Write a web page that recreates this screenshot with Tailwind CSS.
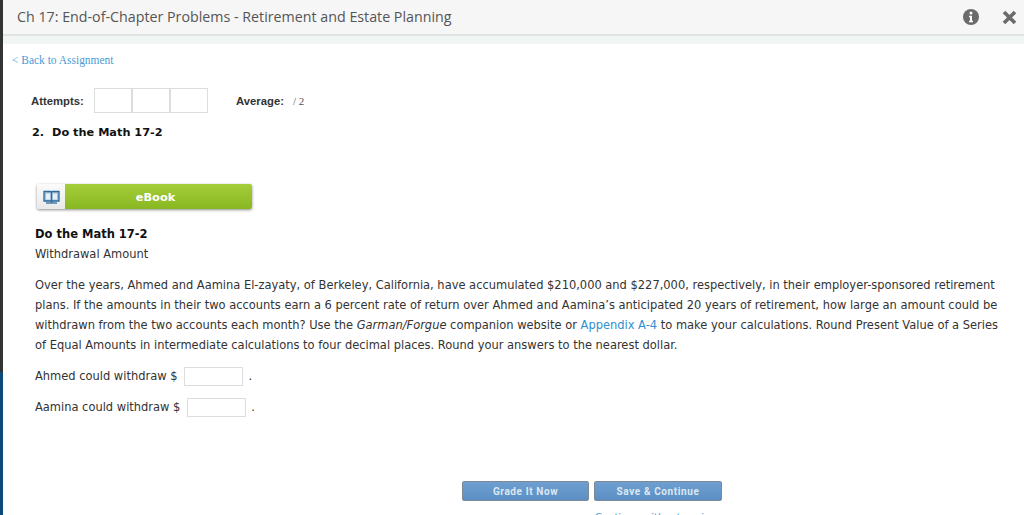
<!DOCTYPE html>
<html lang="en">
<head>
    <meta charset="UTF-8">
    <title>Do the Math 17-2</title>
    <script src="https://cdn.jsdelivr.net/npm/@tailwindcss/browser@4"></script>
</head>
<body class="bg-white h-[515px] overflow-hidden flex font-['DejaVu_Sans',sans-serif]">
    <!-- page edge behind the dialog -->
    <div class="w-[3px] shrink-0 flex flex-col">
        <div class="h-[372px] bg-[#333333]"></div>
        <div class="flex-1 bg-[#0b4a7a]"></div>
    </div>

    <div class="flex-1 min-w-0">
        <header class="h-[36px] bg-[#f6f6f6] border-b-2 border-[#dfe3e2] flex items-center pl-[14px] pr-[7px]">
            <h1 class="font-['Open_Sans',sans-serif] text-[14.25px] text-[#555555] flex-1">Ch 17: End-of-Chapter Problems - Retirement and Estate Planning</h1>
            <svg class="w-4 h-4 mr-[23px]" viewBox="0 0 16 16">
                <circle cx="8" cy="8" r="8" fill="#6b6b6b"/>
                <circle cx="8" cy="4" r="1.5" fill="#fff"/>
                <path d="M6 6.800h3v5h1v1.400H6v-1.400h1V8.200H6z" fill="#fff"/>
            </svg>
            <svg class="w-[15px] h-[15px]" viewBox="0 0 15 15">
                <path d="M2 2l11 11M13 2L2 13" stroke="#6b6b6b" stroke-width="3.6"/>
            </svg>
        </header>
        <div class="h-[8px] bg-[#f1f5f4]"></div>

        <a class="block mt-[9px] ml-[9px] font-['Liberation_Serif',serif] text-[11.45px] leading-[14px] text-[#4a9bd4]">&lt; Back to Assignment</a>

        <div class="mt-[21px] ml-[28px] flex items-center font-['Liberation_Sans',sans-serif] text-[11.3px] font-bold text-[#333333]">
            <span class="w-[63px] pt-[1px]">Attempts:</span>
            <div class="flex border border-[#dddddd] h-[25px] w-[114px]">
                <div class="flex-1 border-r-2 border-[#dddddd]"></div>
                <div class="flex-1 border-r-2 border-[#dddddd]"></div>
                <div class="flex-1"></div>
            </div>
            <span class="ml-[28px] pt-[1px]">Average:</span>
            <span class="ml-[9px] pt-[1px] font-['Liberation_Serif',serif] text-[11px] font-normal text-[#555555]">/ 2</span>
        </div>

        <h2 class="mt-[12px] ml-[29px] text-[11.3px] leading-[16px] font-bold text-[#111111] whitespace-pre">2.  Do the Math 17-2</h2>

        <div class="mt-[43px] ml-[34px] flex w-[215px] h-[25px] rounded-[2px] shadow-[0_1px_3px_rgba(0,0,0,0.45)]">
            <div class="w-[28px] bg-gradient-to-b from-[#fbfbfb] to-[#e9e9e9] flex items-center justify-center rounded-l-[2px]">
                <svg class="w-[17px] h-[14px]" viewBox="0 0 17 14">
                    <path d="M1 1.500h6.500l1 1 1-1H16v9.500H9.500l-1 1-1-1H1z" fill="#9fc0dc" stroke="#2f6a9c" stroke-width="1.300"/>
                    <path d="M3 3.500h4v6H3zM10 3.500h4v6h-4z" fill="#e6eff6"/>
                    <path d="M8.500 2.500v9" stroke="#2f6a9c" stroke-width="1"/>
                    <path d="M3 13h11" stroke="#2f6a9c" stroke-width="1.300"/>
                </svg>
            </div>
            <div class="flex-1 bg-gradient-to-b from-[#a5cd3a] to-[#88b820] rounded-r-[2px] flex items-center justify-center pr-[6px] pt-[3px] text-[11.3px] font-bold text-white">eBook</div>
        </div>

        <section class="ml-[32px] mr-[20px] mt-[17px] text-[11.46px] text-[#333333]">
            <h3 class="text-[11.500px] leading-[16px] font-bold text-[#111111]">Do the Math 17-2</h3>
            <p class="mt-[4px] leading-[16px]">Withdrawal Amount</p>
            <p class="mt-[13px] leading-[20px] whitespace-nowrap">
                Over the years, Ahmed and Aamina El-zayaty, of Berkeley, California, have accumulated $210,000 and $227,000, respectively, in their employer-sponsored retirement<br>
                plans. If the amounts in their two accounts earn a 6 percent rate of return over Ahmed and Aamina’s anticipated 20 years of retirement, how large an amount could be<br>
                withdrawn from the two accounts each month? Use the <em>Garman/Forgue</em> companion website or <a class="text-[#2f8fd0]">Appendix A-4</a> to make your calculations. Round Present Value of a Series<br>
                of Equal Amounts in intermediate calculations to four decimal places. Round your answers to the nearest dollar.
            </p>
            <div class="mt-[12px] flex items-center h-[19px]">
                <span>Ahmed could withdraw $</span>
                <div class="ml-[7px] w-[59px] h-[19px] border border-[#dddddd]"></div>
                <span class="ml-[5px]">.</span>
            </div>
            <div class="mt-[12px] flex items-center h-[19px]">
                <span>Aamina could withdraw $</span>
                <div class="ml-[7px] w-[59px] h-[19px] border border-[#dddddd]"></div>
                <span class="ml-[5px]">.</span>
            </div>
        </section>

        <div class="mt-[64px] ml-[459px] flex gap-[5px] font-['Roboto',sans-serif] text-[10px] font-bold tracking-[0.6px] text-[#dce8f3]">
            <div class="w-[127px] h-[20px] border border-[#7d8a96] rounded-[2px] bg-gradient-to-b from-[#6f9fd0] to-[#5b8fc4] flex items-center justify-center">Grade It Now</div>
            <div class="w-[128px] h-[20px] border border-[#7d8a96] rounded-[2px] bg-gradient-to-b from-[#6f9fd0] to-[#5b8fc4] flex items-center justify-center">Save &amp; Continue</div>
        </div>
        <a class="block mt-[9px] ml-[592px] text-[10px] text-[#4a9bd4] whitespace-nowrap">Continue without saving</a>
    </div>
</body>
</html>
